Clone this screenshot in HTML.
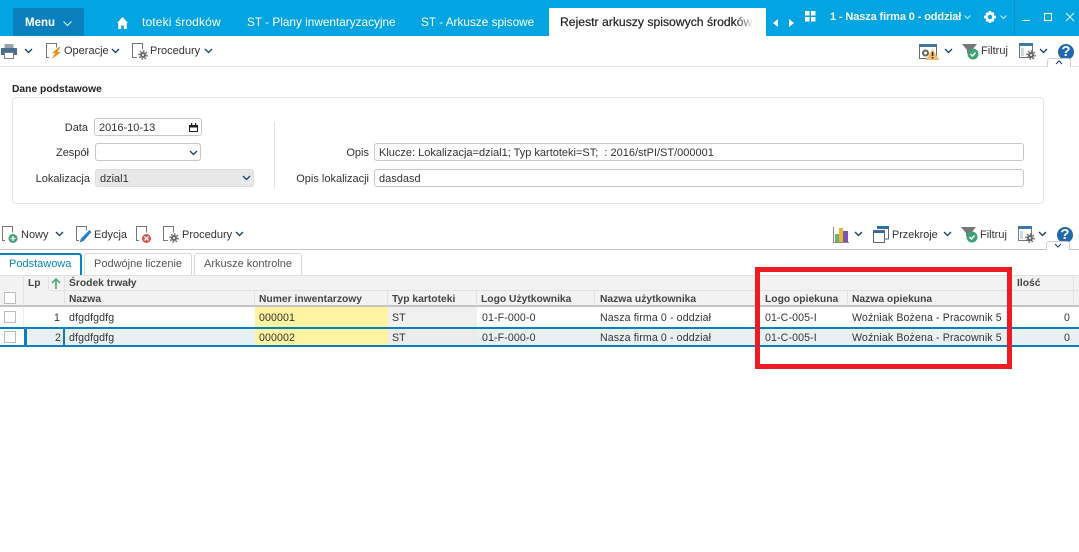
<!DOCTYPE html>
<html><head><meta charset="utf-8">
<style>
html,body{margin:0;padding:0;background:#fff}
#p{position:relative;width:1079px;height:552px;overflow:hidden;background:#fff;font-family:"Liberation Sans",sans-serif;font-size:11px;color:#333}
#p div{position:absolute;white-space:pre;box-sizing:border-box}
.t{line-height:14px}
.w{color:#fff;font-size:11.8px}
.r{text-align:right}
.h{font-weight:bold;color:#444;font-size:10.3px}
.g{font-size:10.6px;letter-spacing:.12px}
svg{position:absolute;overflow:visible}
.inp{background:#fff;border:1px solid #c8c8c8;border-radius:3px}
.c{fill:none;stroke:#123f6d;stroke-width:1.3}
.ck{width:12px;height:12px;background:#fff;border:1px solid #bdbdbd}
.gr{fill:none;stroke:#666;stroke-width:2}
.gt{fill:none;stroke:#666;stroke-width:1.5;stroke-dasharray:1.6 1.5}
</style></head><body><div id="p">

<!-- top bar -->
<div style="left:0;top:0;width:1079px;height:36px;background:#02a5e2"></div>
<div style="left:13px;top:8px;width:71px;height:28px;background:#0a7fbd;border-radius:2px 2px 0 0"></div>
<div class="t w" style="left:25px;top:16px;font-weight:bold;font-size:11.5px">Menu</div>
<svg style="left:63px;top:21px" width="9" height="5"><path d="M.5.5l4 4 4-4" fill="none" stroke="#cfe8f5" stroke-width="1.2"/></svg>
<svg style="left:117px;top:17px" width="11" height="12"><path d="M5.500 0L0 6h1.200v6h3V8.500h2.600V12h3V6H11z" fill="#fff"/></svg>
<div class="t w" style="left:142px;top:15px;font-size:12px;letter-spacing:.15px">toteki środków</div>
<div class="t w" style="left:247px;top:15px">ST - Plany inwentaryzacyjne</div>
<div class="t w" style="left:421px;top:15px">ST - Arkusze spisowe</div>
<div style="left:549px;top:8px;width:217px;height:28px;background:#fff"></div>
<div class="t" style="left:560px;top:15px;font-size:12.2px;color:#222;width:194px;overflow:hidden;-webkit-text-stroke:.2px #222">Rejestr arkuszy spisowych środków</div>
<div style="left:736px;top:12px;width:18px;height:20px;background:linear-gradient(90deg,rgba(255,255,255,0),#fff)"></div>
<svg style="left:773px;top:19px" width="21" height="8"><path d="M5 0v8L0 4zM16 0v8l5-4z" fill="#fff"/></svg>
<svg style="left:805px;top:11px" width="11" height="11"><path d="M0 0h4.500v4.500H0zM6 0h4.500v4.500H6zM0 6h4.500v4.500H0zM6 6h4.500v4.500H6z" fill="#fff"/></svg>
<div class="t" style="left:830px;top:10px;font-size:11px;font-weight:bold;color:#f2fbff;letter-spacing:-.12px">1 - Nasza firma 0 - oddział</div>
<svg style="left:964px;top:15px" width="7" height="4"><path d="M.5.500l3 3 3-3" fill="none" stroke="#cfe8f5"/></svg>
<svg style="left:984px;top:11px" width="12" height="12" viewBox="0 0 13 13"><circle cx="6.500" cy="6.500" r="3.700" fill="none" stroke="#fff" stroke-width="2.600"/><path d="M5 0h3v2H5zM5 11h3v2H5zM0 5h2v3H0zM11 5h2v3h-2zM1.500 3l2-2 1 1-2 2zM9.500 1l2 2-1.500 1-1.500-1.500zM1.500 10l2 2 1-1-1.500-1.500zM11.500 10l-2 2-1-1 1.500-1.500z" fill="#fff"/></svg>
<svg style="left:1000px;top:15px" width="7" height="4"><path d="M.5.500l3 3 3-3" fill="none" stroke="#cfe8f5"/></svg>
<div style="left:1014px;top:0;width:1px;height:36px;background:#0a8fc9"></div>
<div style="left:1022px;top:20px;width:8px;height:1px;background:#e3f4fb"></div>
<div style="left:1044px;top:13px;width:8px;height:8px;border:1px solid #fff"></div>
<svg style="left:1066px;top:13px" width="8" height="8"><path d="M0 0L8 8M8 0L0 8" stroke="#e3f4fb"/></svg>

<!-- toolbar 1 -->
<div style="left:0;top:66px;width:1079px;height:1px;background:#e6e6e6"></div>
<svg style="left:1px;top:44px" width="16" height="15"><path d="M3.500 0h9v4h-9z" fill="#9aa3ab"/><path d="M0 4h16v7H0z" fill="#4a6e92"/><path d="M3.500 8.500h9v6h-9z" fill="#fff" stroke="#74808a"/></svg>
<svg style="left:24px;top:48px" width="9" height="6"><path class="c" d="M1 1l3.500 3.500L8 1"/></svg>
<svg style="left:46px;top:43px" width="16" height="17"><path d="M3 14.500H.5V.5h10v4" fill="none" stroke="#777"/><path d="M13 4L6 10h3l-3 6 9-7h-3.500l3-5z" fill="#e8951f"/></svg>
<div class="t" style="left:64px;top:44px">Operacje</div>
<svg style="left:111px;top:48px" width="9" height="6"><path class="c" d="M1 1l3.500 3.500L8 1"/></svg>
<svg style="left:132px;top:43px" width="16" height="17"><path d="M5 14.500H.5V.5h10v6" fill="none" stroke="#777"/><circle class="gr" cx="11" cy="12" r="2"/><circle class="gt" cx="11" cy="12" r="4"/></svg>
<div class="t" style="left:150px;top:44px">Procedury</div>
<svg style="left:204px;top:48px" width="9" height="6"><path class="c" d="M1 1l3.500 3.500L8 1"/></svg>

<svg style="left:919px;top:44px" width="20" height="16"><path d="M.5.500h17v14H.5z" fill="#fff" stroke="#5c6f80"/><path d="M0 0h18v3H0z" fill="#3d78ad"/><circle cx="6.500" cy="9" r="2.500" fill="none" stroke="#666" stroke-width="2"/><path d="M13.500 5l7 11h-14z" fill="#f0bd6a"/><path d="M12.800 8h1.500v4h-1.500zM12.800 13h1.500v1.500h-1.500z" fill="#222"/></svg>
<svg style="left:944px;top:48px" width="9" height="6"><path class="c" d="M1 1l3.500 3.500L8 1"/></svg>
<svg style="left:962px;top:44px" width="18" height="16"><path d="M0 0h15L10 6v3H5V6z" fill="#777"/><circle cx="11" cy="10" r="5.500" fill="#3fa274"/><path d="M8.500 10l2 2 3-3.500" fill="none" stroke="#fff" stroke-width="1.500"/></svg>
<div class="t" style="left:981px;top:44px">Filtruj</div>
<svg style="left:1019px;top:43px" width="18" height="17"><path d="M.5.500h13v14H.5z" fill="#fff" stroke="#6a7c8c"/><path d="M0 0h14v3H0z" fill="#3d78ad"/><path d="M2 5h3v8H2z" fill="#cfd9e2"/><circle class="gr" cx="12" cy="12" r="2"/><circle class="gt" cx="12" cy="12" r="4"/></svg>
<svg style="left:1039px;top:48px" width="9" height="6"><path class="c" d="M1 1l3.500 3.500L8 1"/></svg>
<svg style="left:1058px;top:44px" width="16" height="16"><circle cx="8" cy="8" r="8" fill="#2268ae"/></svg>
<div class="t" style="left:1058px;top:45px;width:16px;text-align:center;color:#fff;font-weight:bold;font-size:15px">?</div>
<div style="left:1047px;top:58px;width:24px;height:9px;background:#fff;border:1px solid #d0d0d0;border-bottom:0;border-radius:3px 3px 0 0"></div>
<svg style="left:1055px;top:60px" width="8" height="5"><path class="c" d="M1 4l3-3 3 3" style="stroke-width:1"/></svg>

<!-- form -->
<div class="t" style="left:12px;top:83px;font-weight:bold;font-size:10.3px;color:#222">Dane podstawowe</div>
<div style="left:12px;top:97px;width:1032px;height:107px;border:1px solid #e5e5e5;border-radius:4px"></div>
<div class="t r" style="left:0;top:121px;width:88px">Data</div>
<div class="inp" style="left:94px;top:118px;width:108px;height:18px"></div>
<div class="t" style="left:99px;top:121px">2016-10-13</div>
<svg style="left:189px;top:123px" width="9" height="9"><path d="M.5 2.500h8v6h-8z" fill="none" stroke="#222"/><path d="M0 2h9v2.500H0zM2 0h1.200v2H2zM6 0h1.200v2H6z" fill="#222"/></svg>
<div class="t r" style="left:0;top:146px;width:89px">Zespół</div>
<div class="inp" style="left:95px;top:143px;width:106px;height:18px"></div>
<svg style="left:189px;top:150px" width="9" height="6"><path class="c" d="M1 1l3.500 3.500L8 1"/></svg>
<div class="t r" style="left:0;top:172px;width:90px">Lokalizacja</div>
<div style="left:95px;top:169px;width:159px;height:18px;background:#e8e8e8;border:1px solid #ddd;border-radius:3px"></div>
<div class="t" style="left:100px;top:172px">dzial1</div>
<svg style="left:242px;top:175px" width="9" height="6"><path class="c" d="M1 1l3.500 3.500L8 1"/></svg>
<div style="left:274px;top:122px;width:1px;height:67px;background:#e2e2e2"></div>
<div class="t r" style="left:280px;top:146px;width:89px">Opis</div>
<div class="inp" style="left:374px;top:143px;width:650px;height:18px"></div>
<div class="t" style="left:379px;top:146px">Klucze: Lokalizacja=dzial1; Typ kartoteki=ST;  : 2016/stPI/ST/000001</div>
<div class="t r" style="left:280px;top:172px;width:89px">Opis lokalizacji</div>
<div class="inp" style="left:374px;top:169px;width:650px;height:18px"></div>
<div class="t" style="left:379px;top:172px">dasdasd</div>

<!-- toolbar 2 -->
<svg style="left:2px;top:226px" width="16" height="17"><path d="M3 14.500H.5V.5h10v6" fill="none" stroke="#777"/><circle cx="11" cy="12.500" r="4.500" fill="#45a37c"/><path d="M8.500 12.500h5M11 10v5" stroke="#fff" stroke-width="1.300"/></svg>
<div class="t" style="left:21px;top:228px">Nowy</div>
<svg style="left:55px;top:231px" width="9" height="6"><path class="c" d="M1 1l3.500 3.500L8 1"/></svg>
<svg style="left:76px;top:226px" width="16" height="17"><path d="M3 14.500H.5V.5h10v4" fill="none" stroke="#777"/><path d="M13.500 4l2 2-8 9-4 1.500 1.500-4z" fill="#2f7fc0"/></svg>
<div class="t" style="left:94px;top:228px">Edycja</div>
<svg style="left:136px;top:226px" width="16" height="17"><path d="M3 14.500H.5V.5h10v6" fill="none" stroke="#777"/><circle cx="10.500" cy="12.500" r="4.500" fill="#d9534a"/><path d="M8.500 10.500l4 4M12.500 10.500l-4 4" stroke="#fff" stroke-width="1.300"/></svg>
<svg style="left:163px;top:226px" width="16" height="17"><path d="M5 14.500H.5V.5h10v6" fill="none" stroke="#777"/><circle class="gr" cx="11" cy="12" r="2"/><circle class="gt" cx="11" cy="12" r="4"/></svg>
<div class="t" style="left:182px;top:228px">Procedury</div>
<svg style="left:235px;top:231px" width="9" height="6"><path class="c" d="M1 1l3.500 3.500L8 1"/></svg>

<svg style="left:833px;top:227px" width="16" height="17"><path d="M.5 0v15.500H16" fill="none" stroke="#888"/><path d="M2 7h4v8H2z" fill="#6db36b"/><path d="M6 1h4v14H6z" fill="#e8b830"/><path d="M10 4h5v11h-5z" fill="#7a55b5"/></svg>
<svg style="left:854px;top:231px" width="9" height="6"><path class="c" d="M1 1l3.500 3.500L8 1"/></svg>
<svg style="left:873px;top:226px" width="16" height="17"><path d="M4 0h12v3H4z" fill="#2f6fa8"/><path d="M0 4h12v3H0z" fill="#2f6fa8"/><path d="M.5 4.500h11v12H.5z" fill="none" stroke="#5a6a78"/><path d="M15.500 3v10H12" fill="none" stroke="#5a6a78"/></svg>
<div class="t" style="left:892px;top:228px;font-size:10.8px">Przekroje</div>
<svg style="left:943px;top:231px" width="9" height="6"><path class="c" d="M1 1l3.500 3.500L8 1"/></svg>
<svg style="left:961px;top:227px" width="18" height="16"><path d="M0 0h15L10 6v3H5V6z" fill="#777"/><circle cx="11" cy="10" r="5.500" fill="#3fa274"/><path d="M8.500 10l2 2 3-3.500" fill="none" stroke="#fff" stroke-width="1.500"/></svg>
<div class="t" style="left:980px;top:228px">Filtruj</div>
<svg style="left:1018px;top:226px" width="18" height="17"><path d="M.5.500h13v14H.5z" fill="#fff" stroke="#6a7c8c"/><path d="M0 0h14v3H0z" fill="#3d78ad"/><path d="M2 5h3v8H2z" fill="#cfd9e2"/><circle class="gr" cx="12" cy="12" r="2"/><circle class="gt" cx="12" cy="12" r="4"/></svg>
<svg style="left:1038px;top:231px" width="9" height="6"><path class="c" d="M1 1l3.500 3.500L8 1"/></svg>
<svg style="left:1057px;top:227px" width="16" height="16"><circle cx="8" cy="8" r="8" fill="#2268ae"/></svg>
<div class="t" style="left:1057px;top:228px;width:16px;text-align:center;color:#fff;font-weight:bold;font-size:15px">?</div>
<div style="left:0;top:249px;width:1079px;height:1px;background:#c4c4c4"></div>
<div style="left:1046px;top:241px;width:24px;height:9px;background:#fff;border:1px solid #d0d0d0;border-bottom:0;border-radius:3px 3px 0 0"></div>
<svg style="left:1054px;top:243px" width="8" height="5"><path class="c" d="M1 1l3 3 3-3" style="stroke-width:1"/></svg>

<!-- tabs -->
<div style="left:0;top:253px;width:82px;height:22px;background:#fff;border-top:2px solid #0a84c1;border-right:2px solid #0a84c1;border-radius:0 3px 0 0"></div>
<div class="t" style="left:9px;top:257px;color:#0a84c1">Podstawowa</div>
<div style="left:84px;top:253px;width:108px;height:22px;border:1px solid #d8d8d8;border-bottom:0;border-radius:3px 3px 0 0"></div>
<div class="t" style="left:94px;top:257px;color:#555">Podwójne liczenie</div>
<div style="left:194px;top:253px;width:108px;height:22px;border:1px solid #d8d8d8;border-bottom:0;border-radius:3px 3px 0 0"></div>
<div class="t" style="left:204px;top:257px;color:#555">Arkusze kontrolne</div>

<!-- grid header -->
<div style="left:0;top:275px;width:1079px;height:31px;background:#f2f2f2"></div>
<div style="left:0;top:275px;width:1079px;height:1px;background:#e0e0e0"></div>
<div style="left:49px;top:290px;width:1030px;height:1px;background:#e2e2e2"></div>
<div style="left:0;top:305px;width:1079px;height:2px;background:#c4c4c4"></div>
<div style="left:23px;top:275px;width:1px;height:31px;background:#e2e2e2"></div>
<div style="left:48px;top:275px;width:1px;height:15px;background:#e2e2e2"></div>
<div style="left:64px;top:275px;width:1px;height:31px;background:#e2e2e2"></div>
<div style="left:254px;top:291px;width:1px;height:15px;background:#e2e2e2"></div>
<div style="left:387px;top:291px;width:1px;height:15px;background:#e2e2e2"></div>
<div style="left:476px;top:291px;width:1px;height:15px;background:#e2e2e2"></div>
<div style="left:594px;top:291px;width:1px;height:15px;background:#e2e2e2"></div>
<div style="left:847px;top:291px;width:1px;height:15px;background:#e2e2e2"></div>
<div style="left:1073px;top:275px;width:1px;height:31px;background:#e2e2e2"></div>
<div class="t h" style="left:28px;top:277px">Lp</div>
<svg style="left:51px;top:278px" width="10" height="11"><path d="M5 11V1M1 5l4-4 4 4" fill="none" stroke="#3fa274" stroke-width="1.500"/></svg>
<div class="t h" style="left:69px;top:277px">Środek trwały</div>
<div class="t h" style="left:1017px;top:277px">Ilość</div>
<div class="ck" style="left:4px;top:292px"></div>
<div class="t h" style="left:69px;top:293px">Nazwa</div>
<div class="t h" style="left:259px;top:293px">Numer inwentarzowy</div>
<div class="t h" style="left:392px;top:293px">Typ kartoteki</div>
<div class="t h" style="left:481px;top:293px">Logo Użytkownika</div>
<div class="t h" style="left:600px;top:293px">Nazwa użytkownika</div>
<div class="t h" style="left:765px;top:293px">Logo opiekuna</div>
<div class="t h" style="left:852px;top:293px">Nazwa opiekuna</div>

<!-- row 1 -->
<div style="left:23px;top:307px;width:1px;height:20px;background:#ececec"></div>
<div style="left:255px;top:307px;width:133px;height:20px;background:#fdf3a0"></div>
<div style="left:388px;top:307px;width:89px;height:20px;background:#f0f0f0"></div>
<div class="ck" style="left:4px;top:311px"></div>
<div class="t r g" style="left:30px;top:311px;width:30px">1</div>
<div class="t g" style="left:69px;top:311px">dfgdfgdfg</div>
<div class="t g" style="left:259px;top:311px">000001</div>
<div class="t g" style="left:392px;top:311px">ST</div>
<div class="t g" style="left:482px;top:311px">01-F-000-0</div>
<div class="t g" style="left:600px;top:311px">Nasza firma 0 - oddział</div>
<div class="t g" style="left:765px;top:311px">01-C-005-I</div>
<div class="t g" style="left:852px;top:311px">Woźniak Bożena - Pracownik 5</div>
<div class="t r g" style="left:1040px;top:311px;width:30px">0</div>

<!-- row 2 -->
<div style="left:24px;top:329px;width:1055px;height:16px;background:#e9f0f4"></div>
<div style="left:255px;top:329px;width:133px;height:16px;background:#fdf3a0"></div>
<div style="left:388px;top:329px;width:89px;height:16px;background:#ececec"></div>
<div style="left:0;top:327px;width:1079px;height:2px;background:#0a7fbd"></div>
<div style="left:0;top:345px;width:1079px;height:2px;background:#0a7fbd"></div>
<div style="left:24px;top:327px;width:41px;height:20px;border:2px solid #0a7fbd;border-left-width:3px"></div>
<div class="ck" style="left:4px;top:331px"></div>
<div class="t r g" style="left:30px;top:331px;width:31px">2</div>
<div class="t g" style="left:69px;top:331px">dfgdfgdfg</div>
<div class="t g" style="left:259px;top:331px">000002</div>
<div class="t g" style="left:392px;top:331px">ST</div>
<div class="t g" style="left:482px;top:331px">01-F-000-0</div>
<div class="t g" style="left:600px;top:331px">Nasza firma 0 - oddział</div>
<div class="t g" style="left:765px;top:331px">01-C-005-I</div>
<div class="t g" style="left:852px;top:331px">Woźniak Bożena - Pracownik 5</div>
<div class="t r g" style="left:1040px;top:331px;width:30px">0</div>

<!-- red highlight -->
<div style="left:755px;top:267px;width:257px;height:102px;border:5px solid #ed1c24"></div>

</div></body></html>
